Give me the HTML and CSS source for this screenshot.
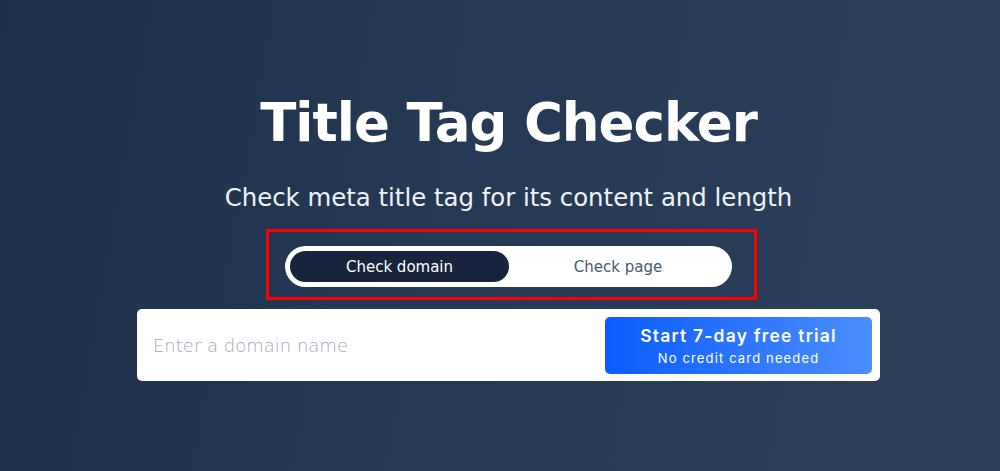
FILE: index.html
```html
<!DOCTYPE html>
<html lang="en">
<head>
<meta charset="utf-8">
<title>Title Tag Checker</title>
<link rel="stylesheet" href="styles.css">
</head>
<body>
<main class="hero">
  <h1 class="hero-title">Title Tag Checker</h1>
  <p class="hero-subtitle">Check meta title tag for its content and length</p>
  <div class="mode-frame">
    <div class="mode-toggle">
      <button class="mode-option is-active" type="button">Check domain</button>
      <button class="mode-option" type="button">Check page</button>
    </div>
  </div>
  <form class="search-card">
    <input class="search-input" type="text" placeholder="Enter a domain name">
    <button class="trial-button" type="button">
      <span class="trial-main">Start 7-day free trial</span>
      <span class="trial-sub">No credit card needed</span>
    </button>
  </form>
</main>
</body>
</html>
```
FILE: styles.css
```css
html, body {
  margin: 0;
  height: 100%;
}
body {
  background: linear-gradient(100deg, #1f304a 0%, #263a56 50%, #2c405c 100%);
  font-family: "DejaVu Sans", "Noto Sans", sans-serif;
  color: #fff;
}
.hero {
  display: flex;
  flex-direction: column;
  align-items: center;
  padding-top: 88px;
}
.hero-title {
  margin: 0;
  font-size: 53px;
  line-height: 70px;
  font-weight: 700;
  letter-spacing: -1px;
  padding-left: 17px;
}
.hero-subtitle {
  margin: 24px 0 0;
  font-size: 24.4px;
  line-height: 32px;
  font-weight: 400;
  color: #eef2f7;
  letter-spacing: 0;
  padding-left: 17px;
}
.mode-frame {
  margin-top: 15px;
  width: 491px;
  height: 71px;
  box-sizing: border-box;
  border: 3px solid #ff0000;
  display: flex;
  align-items: center;
  justify-content: center;
  margin-left: 23px;
}
.mode-toggle {
  width: 447px;
  height: 41px;
  box-sizing: border-box;
  background: #fff;
  border-radius: 21px;
  padding: 5px;
  display: flex;
  margin: 4px 6px 0 0;
}
.mode-option {
  flex: 1;
  border: 0;
  border-radius: 16px;
  background: transparent;
  font-family: inherit;
  font-size: 15px;
  color: #4a5a70;
  padding: 0;
  cursor: pointer;
}
.mode-option.is-active {
  flex: 0 0 219px;
  background: #16243d;
  color: #fff;
}
.search-card {
  margin-top: 9px;
  width: 743px;
  height: 72px;
  box-sizing: border-box;
  background: #fff;
  border-radius: 5px;
  padding: 8px 8px 7px 16px;
  display: flex;
  align-items: stretch;
  margin-left: 17px;
}
.search-input {
  flex: 1;
  border: 0;
  outline: none;
  font-family: inherit;
  font-size: 18px;
  font-weight: 300;
  color: #333;
  background: transparent;
  padding: 0;
}
.search-input::placeholder {
  color: #a0a9bc;
}
.trial-button {
  width: 267px;
  border: 0;
  border-radius: 5px;
  background: linear-gradient(90deg, #0a5cff 0%, #4d8dff 100%);
  color: #fff;
  display: flex;
  flex-direction: column;
  align-items: center;
  justify-content: center;
  gap: 4px;
  font-family: "Inter", "Noto Sans", sans-serif;
  cursor: pointer;
}
.trial-main {
  font-size: 17.5px;
  font-weight: 600;
  letter-spacing: 1.2px;
}
.trial-sub {
  font-size: 13px;
  font-weight: 400;
  letter-spacing: 1.15px;
}
```
